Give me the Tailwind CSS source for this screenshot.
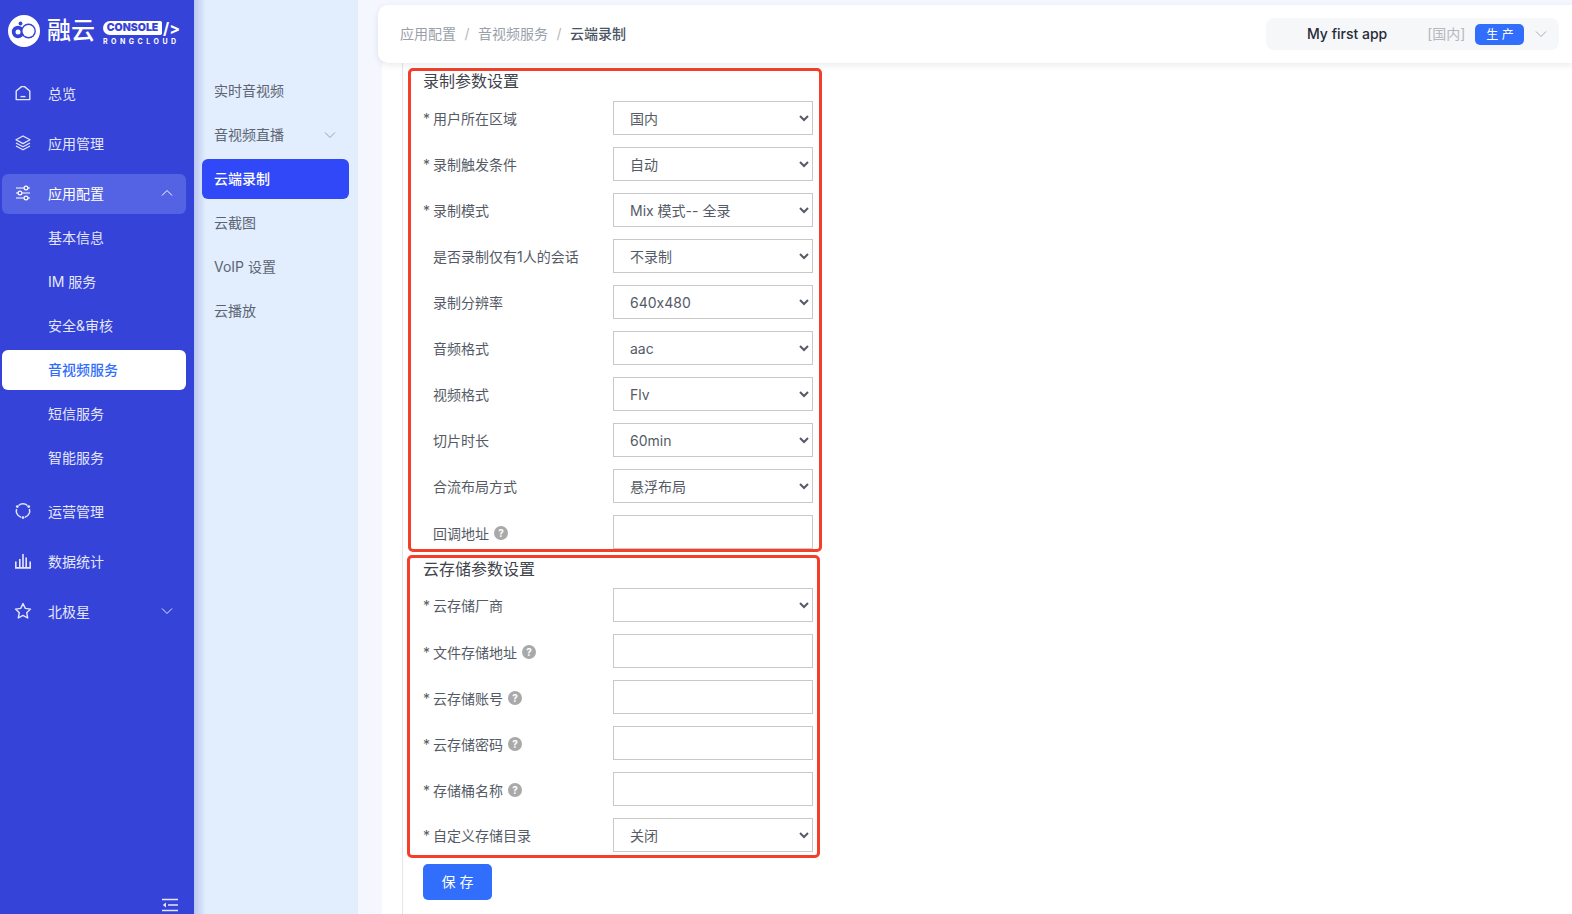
<!DOCTYPE html>
<html lang="zh">
<head>
<meta charset="utf-8">
<title>云端录制</title>
<script src="https://cdn.jsdelivr.net/npm/@tailwindcss/browser@4"></script>
</head>
<body class="overflow-hidden bg-white font-['Inter','Noto_Sans_CJK_SC',sans-serif] [font-feature-settings:'calt'_0]">
<div class="flex h-[914px] w-[1572px] overflow-hidden">

  <!-- Primary sidebar -->
  <aside class="relative z-10 flex h-full w-[194px] shrink-0 flex-col bg-[#3543d8] text-[14px] text-[#e4e7fb]">
    <div class="flex h-[69px] items-start pl-[8px] pt-[15px]">
      <svg class="h-[32px] w-[32px] shrink-0" viewBox="0 0 32 32">
        <circle cx="16" cy="16" r="16" fill="#fff"/>
        <circle cx="10" cy="17" r="6.2" fill="#3543d8"/>
        <circle cx="10" cy="17" r="2.5" fill="#fff"/>
        <circle cx="20.5" cy="16" r="7.4" fill="#3543d8"/>
        <circle cx="20.5" cy="16" r="6" fill="#fff"/>
        <circle cx="12.5" cy="8.5" r="1.9" fill="#3543d8"/>
      </svg>
      <span class="ml-[7px] text-[24px] leading-[32px] font-medium text-white">融云</span>
      <div class="ml-[8px] mt-[6px] flex flex-col">
        <div class="flex items-center">
          <span class="flex h-[14px] w-[59px] items-center justify-center rounded-l-[8px] rounded-r-[2px] bg-white text-[10.5px] leading-none font-black text-[#3543d8]">CONSOLE</span>
          <span class="ml-[1px] text-[16px] leading-[14px] font-bold text-white">/&gt;</span>
        </div>
        <span class="mt-[3px] text-[7px] leading-[7px] font-bold tracking-[3.5px] text-white">RONGCLOUD</span>
      </div>
    </div>

    <nav class="flex flex-col">
      <a class="mb-[10px] ml-[2px] mr-[8px] mt-[5px] flex h-[40px] items-center rounded-[6px] pb-[2px] pl-[13px]">
        <svg class="h-[16px] w-[16px]" viewBox="0 0 16 16" fill="none" stroke="currentColor" stroke-width="1.4"><path d="M1.2 6 6.5 1.6h3L14.8 6V14.6H1.2z" stroke-linejoin="round"/><path d="M5.5 11.6h5"/></svg>
        <span class="ml-[17px]">总览</span>
      </a>
      <a class="mb-[10px] ml-[2px] mr-[8px] flex h-[40px] items-center rounded-[6px] pb-[2px] pl-[13px]">
        <svg class="h-[16px] w-[16px]" viewBox="0 0 16 16" fill="none" stroke="currentColor" stroke-width="1.3" stroke-linejoin="round"><path d="M8 1 15 4.8 8 8.6 1 4.8z"/><path d="M1 8 8 11.8 15 8"/><path d="M1 11 8 14.8 15 11"/></svg>
        <span class="ml-[17px]">应用管理</span>
      </a>
      <a class="mb-[4px] ml-[2px] mr-[8px] flex h-[40px] items-center rounded-[6px] bg-[#5463e3] pb-[2px] pl-[13px] pr-[13px] text-white">
        <svg class="h-[16px] w-[16px]" viewBox="0 0 16 16" fill="none" stroke="currentColor" stroke-width="1.2"><path d="M1 3h8M13 3h2M1 8h2M7 8h8M1 13h8M13 13h2"/><circle cx="11" cy="3" r="1.9"/><circle cx="5" cy="8" r="1.9"/><circle cx="11" cy="13" r="1.9"/></svg>
        <span class="ml-[17px]">应用配置</span>
        <svg class="ml-auto h-[8px] w-[12px]" viewBox="0 0 12 8" fill="none" stroke="currentColor" stroke-width="1"><path d="M1 6.5 6 1.5l5 5"/></svg>
      </a>
      <a class="mb-[4px] ml-[2px] mr-[8px] flex h-[40px] items-center rounded-[6px] pb-[2px] pl-[46px]">基本信息</a>
      <a class="mb-[4px] ml-[2px] mr-[8px] flex h-[40px] items-center rounded-[6px] pb-[2px] pl-[46px]">IM 服务</a>
      <a class="mb-[4px] ml-[2px] mr-[8px] flex h-[40px] items-center rounded-[6px] pb-[2px] pl-[46px]">安全&amp;审核</a>
      <a class="mb-[4px] ml-[2px] mr-[8px] flex h-[40px] items-center rounded-[6px] bg-white pb-[2px] pl-[46px] font-medium text-[#316efb]">音视频服务</a>
      <a class="mb-[4px] ml-[2px] mr-[8px] flex h-[40px] items-center rounded-[6px] pb-[2px] pl-[46px]">短信服务</a>
      <a class="mb-[14px] ml-[2px] mr-[8px] flex h-[40px] items-center rounded-[6px] pb-[2px] pl-[46px]">智能服务</a>
      <a class="mb-[10px] ml-[2px] mr-[8px] flex h-[40px] items-center rounded-[6px] pb-[2px] pl-[13px]">
        <svg class="h-[16px] w-[16px]" viewBox="0 0 16 16" fill="none" stroke="currentColor" stroke-width="1.5"><path d="M3.6 2.5A6.6 6.6 0 0 1 12.4 2.5"/><path d="M14.4 6A6.6 6.6 0 0 1 10 14.2"/><path d="M1.6 6A6.6 6.6 0 0 0 6 14.2"/><circle cx="2.3" cy="3.6" r="1.4" fill="currentColor" stroke="none"/><circle cx="13.7" cy="3.6" r="1.4" fill="currentColor" stroke="none"/><circle cx="8" cy="14.6" r="1.4" fill="currentColor" stroke="none"/></svg>
        <span class="ml-[17px]">运营管理</span>
      </a>
      <a class="mb-[10px] ml-[2px] mr-[8px] flex h-[40px] items-center rounded-[6px] pb-[2px] pl-[13px]">
        <svg class="h-[16px] w-[16px]" viewBox="0 0 16 16" fill="none" stroke="currentColor" stroke-width="1.6"><path d="M.8 8.5v6.4h14.4V8.5"/><path d="M4.8 6v8.5M8 1v13.5M11.2 4.5v10"/></svg>
        <span class="ml-[17px]">数据统计</span>
      </a>
      <a class="ml-[2px] mr-[8px] flex h-[40px] items-center rounded-[6px] pb-[2px] pl-[12px] pr-[13px]">
        <svg class="h-[18px] w-[18px]" viewBox="0 0 18 18" fill="none" stroke="currentColor" stroke-width="1.4" stroke-linejoin="round"><path d="M9 1.6 11.3 6.4 16.5 7.1 12.7 10.7 13.7 16 9 13.4 4.3 16 5.3 10.7 1.5 7.1 6.7 6.4z"/></svg>
        <span class="ml-[16px]">北极星</span>
        <svg class="ml-auto h-[8px] w-[12px]" viewBox="0 0 12 8" fill="none" stroke="currentColor" stroke-width="1"><path d="M1 1.5 6 6.5l5-5"/></svg>
      </a>
    </nav>

    <div class="mt-auto flex justify-end pb-[2px] pr-[16px]">
      <svg class="h-[14px] w-[16px]" viewBox="0 0 16 14" fill="none" stroke="currentColor" stroke-width="1.5"><path d="M0 1.5h16M6 7h10M0 12.5h16"/><path d="M4 4.5v5L.8 7z" fill="currentColor" stroke="none"/></svg>
    </div>
  </aside>

  <!-- Secondary menu -->
  <div class="flex h-full w-[164px] shrink-0 flex-col bg-[#e2eefe] bg-[linear-gradient(90deg,#bcc7ef_0px,#e2eefe_12px)] pl-[8px] pr-[9px] pt-[71px] text-[14px] text-[#5d6573]">
    <a class="mb-[4px] flex h-[40px] items-center rounded-[6px] pb-[2px] pl-[12px]">实时音视频</a>
    <a class="mb-[4px] flex h-[40px] items-center rounded-[6px] pb-[2px] pl-[12px] pr-[13px]">音视频直播
      <svg class="ml-auto mt-[2px] h-[8px] w-[12px] text-[#9aa3b2]" viewBox="0 0 12 8" fill="none" stroke="currentColor" stroke-width="1"><path d="M1 1.5 6 6.5l5-5"/></svg>
    </a>
    <a class="mb-[4px] flex h-[40px] items-center rounded-[6px] bg-[#3048f8] pb-[2px] pl-[12px] font-medium text-white">云端录制</a>
    <a class="mb-[4px] flex h-[40px] items-center rounded-[6px] pb-[2px] pl-[12px]">云截图</a>
    <a class="mb-[4px] flex h-[40px] items-center rounded-[6px] pb-[2px] pl-[12px]">VoIP 设置</a>
    <a class="flex h-[40px] items-center rounded-[6px] pb-[2px] pl-[12px]">云播放</a>
  </div>

  <!-- Right column -->
  <div class="flex h-full min-w-0 flex-1 flex-col bg-[#f4f7fe]">
    <header class="relative z-10 ml-[20px] mt-[5px] flex h-[58px] shrink-0 items-center rounded-l-[10px] bg-white pl-[22px] pr-[13px] text-[14px] shadow-[0_2px_6px_rgba(60,70,110,0.12)]">
      <span class="pb-[2px] text-[#9aa0aa]">应用配置</span>
      <span class="mx-[8.5px] pb-[2px] text-[#b5b8bd]">/</span>
      <span class="pb-[2px] text-[#9aa0aa]">音视频服务</span>
      <span class="mx-[8.5px] pb-[2px] text-[#b5b8bd]">/</span>
      <span class="pb-[2px] font-medium text-[#4b5565]">云端录制</span>
      <div class="ml-auto flex h-[32px] w-[293px] items-center rounded-[8px] bg-[#f6f7f9] pl-[41px] pr-[12px]">
        <span class="pb-[2px] font-medium text-[#262b36]">My first app</span>
        <span class="ml-[40px] pb-[2px] text-[#b5b8bd]">[国内]</span>
        <span class="ml-[10px] flex h-[21px] w-[49px] items-center justify-center rounded-[5px] bg-[#316efb] pt-[1px] text-[12px] text-white">生 产</span>
        <svg class="ml-auto h-[8px] w-[12px] text-[#a8adb6]" viewBox="0 0 12 8" fill="none" stroke="currentColor" stroke-width="1"><path d="M1 1.5 6 6.5l5-5"/></svg>
      </div>
    </header>

    <div class="flex min-h-0 flex-1 pl-[24px]">
      <main class="min-w-0 flex-1 overflow-hidden bg-white pl-[20px]">
        <div class="h-full border-l border-[#e3e5e9] pl-[20px] text-[14px] text-[#555b66]">
          <form class="relative w-[390px]">
            <!-- Section 1 -->
            <div class="absolute left-[-15px] top-[5px] h-[484px] w-[414px] rounded-[5px] border-[3px] border-[#f33e2a]"></div>
            <h3 class="flex h-[38px] items-center pb-[3px] text-[16px] font-normal text-[#3f444d]">录制参数设置</h3>

            <div class="mb-[12px] flex h-[34px] items-center justify-between"><label><span class="inline-block w-[10px]">*</span>用户所在区域</label>
              <select class="h-[34px] w-[200px] border border-[#c8c8c8] bg-white pl-[12px] text-[14px] text-[#555b66]"><option>国内</option></select></div>
            <div class="mb-[12px] flex h-[34px] items-center justify-between"><label><span class="inline-block w-[10px]">*</span>录制触发条件</label>
              <select class="h-[34px] w-[200px] border border-[#c8c8c8] bg-white pl-[12px] text-[14px] text-[#555b66]"><option>自动</option></select></div>
            <div class="mb-[12px] flex h-[34px] items-center justify-between"><label><span class="inline-block w-[10px]">*</span>录制模式</label>
              <select class="h-[34px] w-[200px] border border-[#c8c8c8] bg-white pl-[12px] text-[14px] text-[#555b66]"><option>Mix 模式-- 全录</option></select></div>
            <div class="mb-[12px] flex h-[34px] items-center justify-between"><label class="pl-[10px]">是否录制仅有1人的会话</label>
              <select class="h-[34px] w-[200px] border border-[#c8c8c8] bg-white pl-[12px] text-[14px] text-[#555b66]"><option>不录制</option></select></div>
            <div class="mb-[12px] flex h-[34px] items-center justify-between"><label class="pl-[10px]">录制分辨率</label>
              <select class="h-[34px] w-[200px] border border-[#c8c8c8] bg-white pl-[12px] text-[14px] text-[#555b66]"><option>640x480</option></select></div>
            <div class="mb-[12px] flex h-[34px] items-center justify-between"><label class="pl-[10px]">音频格式</label>
              <select class="h-[34px] w-[200px] border border-[#c8c8c8] bg-white pl-[12px] text-[14px] text-[#555b66]"><option>aac</option></select></div>
            <div class="mb-[12px] flex h-[34px] items-center justify-between"><label class="pl-[10px]">视频格式</label>
              <select class="h-[34px] w-[200px] border border-[#c8c8c8] bg-white pl-[12px] text-[14px] text-[#555b66]"><option>Flv</option></select></div>
            <div class="mb-[12px] flex h-[34px] items-center justify-between"><label class="pl-[10px]">切片时长</label>
              <select class="h-[34px] w-[200px] border border-[#c8c8c8] bg-white pl-[12px] text-[14px] text-[#555b66]"><option>60min</option></select></div>
            <div class="mb-[12px] flex h-[34px] items-center justify-between"><label class="pl-[10px]">合流布局方式</label>
              <select class="h-[34px] w-[200px] border border-[#c8c8c8] bg-white pl-[12px] text-[14px] text-[#555b66]"><option>悬浮布局</option></select></div>
            <div class="flex h-[34px] items-center justify-between"><label class="flex items-center gap-[5px] pl-[10px] pt-[2px]">回调地址<span class="flex h-[14px] w-[14px] items-center justify-center rounded-full bg-[#a9a9a9] text-[10px] font-bold text-white">?</span></label>
              <input class="h-[34px] w-[200px] border border-[#c8c8c8] bg-white" type="text"></div>

            <!-- Section 2 -->
            <div class="absolute left-[-16px] top-[492px] h-[303px] w-[413px] rounded-[5px] border-[3px] border-[#f33e2a]"></div>
            <h3 class="flex h-[39px] items-center text-[16px] font-normal text-[#3f444d]">云存储参数设置</h3>

            <div class="mb-[12px] flex h-[34px] items-center justify-between"><label><span class="inline-block w-[10px]">*</span>云存储厂商</label>
              <select class="h-[34px] w-[200px] border border-[#c8c8c8] bg-white pl-[12px] text-[14px] text-[#555b66]"><option></option></select></div>
            <div class="mb-[12px] flex h-[34px] items-center justify-between"><label class="flex items-center gap-[5px] pt-[2px]"><span><span class="inline-block w-[10px]">*</span>文件存储地址</span><span class="flex h-[14px] w-[14px] items-center justify-center rounded-full bg-[#a9a9a9] text-[10px] font-bold text-white">?</span></label>
              <input class="h-[34px] w-[200px] border border-[#c8c8c8] bg-white" type="text"></div>
            <div class="mb-[12px] flex h-[34px] items-center justify-between"><label class="flex items-center gap-[5px] pt-[2px]"><span><span class="inline-block w-[10px]">*</span>云存储账号</span><span class="flex h-[14px] w-[14px] items-center justify-center rounded-full bg-[#a9a9a9] text-[10px] font-bold text-white">?</span></label>
              <input class="h-[34px] w-[200px] border border-[#c8c8c8] bg-white" type="text"></div>
            <div class="mb-[12px] flex h-[34px] items-center justify-between"><label class="flex items-center gap-[5px] pt-[2px]"><span><span class="inline-block w-[10px]">*</span>云存储密码</span><span class="flex h-[14px] w-[14px] items-center justify-center rounded-full bg-[#a9a9a9] text-[10px] font-bold text-white">?</span></label>
              <input class="h-[34px] w-[200px] border border-[#c8c8c8] bg-white" type="text"></div>
            <div class="mb-[12px] flex h-[34px] items-center justify-between"><label class="flex items-center gap-[5px] pt-[2px]"><span><span class="inline-block w-[10px]">*</span>存储桶名称</span><span class="flex h-[14px] w-[14px] items-center justify-center rounded-full bg-[#a9a9a9] text-[10px] font-bold text-white">?</span></label>
              <input class="h-[34px] w-[200px] border border-[#c8c8c8] bg-white" type="text"></div>
            <div class="flex h-[34px] items-center justify-between"><label><span class="inline-block w-[10px]">*</span>自定义存储目录</label>
              <select class="h-[34px] w-[200px] border border-[#c8c8c8] bg-white pl-[12px] text-[14px] text-[#555b66]"><option>关闭</option></select></div>

            <button type="button" class="mt-[12px] h-[36px] w-[69px] rounded-[5px] bg-[#316efb] pb-[2px] text-[14px] text-white">保 存</button>
          </form>
        </div>
      </main>
    </div>
  </div>
</div>
</body>
</html>
